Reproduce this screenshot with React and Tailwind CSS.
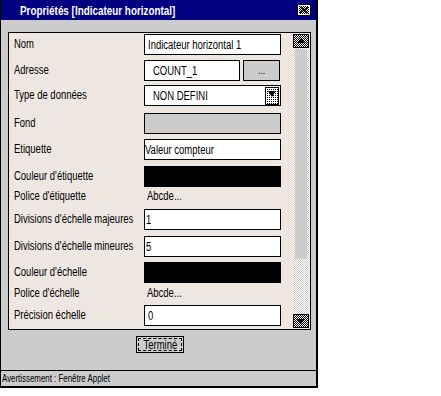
import React from "react";

const font = "font-['Liberation_Sans',Arial,sans-serif]";

// Arial Narrow is not installed, so squeeze Liberation Sans horizontally
const Txt = ({ children, center, tight }) => (
    <span className={`inline-block whitespace-nowrap ${tight ? "scale-x-[0.76]" : "scale-x-[0.79]"} ${center ? "origin-center" : "origin-left"}`}>
        {children}
    </span>
);

const Checker = ({ id }) => (
    <pattern id={id} width="2" height="2" patternUnits="userSpaceOnUse">
        <rect width="2" height="2" fill="#fff" />
        <rect width="1" height="1" fill="#000" />
        <rect x="1" y="1" width="1" height="1" fill="#000" />
    </pattern>
);

const CloseBox = () => (
    <svg width="14" height="12" viewBox="0 0 14 12">
        <defs><Checker id="cb" /></defs>
        <rect x="0.5" y="0.5" width="13" height="11" fill="#fff" stroke="#000" />
        <rect x="2" y="2" width="10" height="8" fill="url(#cb)" />
        <path d="M3 3l8 6M11 3l-8 6" stroke="#000" strokeWidth="1.2" />
    </svg>
);

const ScrollArrow = ({ up }) => (
    <svg width="16" height="14" viewBox="0 0 16 14" className="block">
        <defs><Checker id={up ? "sa1" : "sa2"} /></defs>
        <rect x="0" y="0" width="16" height="14" fill={`url(#${up ? "sa1" : "sa2"})`} />
        <rect x="0.5" y="0.5" width="15" height="13" fill="none" stroke="#000" />
        {up ? <path d="M8 4l4 5H4z" fill="#000" /> : <path d="M8 10l4-5H4z" fill="#000" />}
    </svg>
);

const DropArrow = () => (
    <svg width="14" height="18" viewBox="0 0 14 18" className="block">
        <defs>
            <pattern id="dots" width="2" height="2" patternUnits="userSpaceOnUse">
                <rect width="2" height="2" fill="#fff" />
                <rect width="1" height="1" fill="#000" />
            </pattern>
        </defs>
        <rect width="14" height="18" fill="url(#dots)" />
        <rect x="0.5" y="0.5" width="13" height="17" fill="none" stroke="#000" />
        <path d="M3 4h8l-4 6z" fill="#000" />
    </svg>
);

const Row = ({ label, mt, h = "h-[21px]", children }) => (
    <div className={`flex items-center ${h} ${mt}`}>
        <div className="w-[130px] shrink-0 text-[12px] text-black leading-none pb-[1px]">
            <Txt>{label}</Txt>
        </div>
        <div className="flex items-center">{children}</div>
    </div>
);

const Field = ({ value, w = "w-[137px]", pl = "pl-[3px]" }) => (
    <div className={`${w} h-[21px] bg-white border border-black flex items-center ${pl} text-[12px] leading-none overflow-hidden`}>
        <Txt>{value}</Txt>
    </div>
);

export default function App() {
    return (
        <div className={`w-[318px] h-[388px] flex flex-col bg-[#cccccc] border-l border-r-2 border-b-2 border-black ${font}`}>
            <div className="h-[20px] bg-[#000080] flex items-center justify-between pl-[19px] pr-[5px]">
                <span className="text-white font-bold text-[13px] leading-none">
                    <Txt tight>Propriétés [Indicateur horizontal]</Txt>
                </span>
                <CloseBox />
            </div>

            <div className="mt-[12px] ml-[7px] w-[303px] h-[298px] bg-[#eee7e1] border border-black flex">
                <div className="flex-1 pl-[5px]">
                    <Row label="Nom" mt="mt-[1px]">
                        <Field value="Indicateur horizontal 1" />
                    </Row>
                    <Row label="Adresse" mt="mt-[5px]">
                        <Field value="COUNT_1" w="w-[96px]" pl="pl-[8px]" />
                        <div className="ml-[3px] w-[37px] h-[21px] bg-[#cccccc] border border-black flex items-end justify-center pb-[4px] text-[11px] leading-none">
                            <Txt center>...</Txt>
                        </div>
                    </Row>
                    <Row label="Type de données" mt="mt-[4px]">
                        <div className="w-[137px] h-[21px] bg-white border border-black flex items-center justify-between pl-[8px] pr-[1px] text-[12px] leading-none">
                            <Txt>NON DEFINI</Txt>
                            <DropArrow />
                        </div>
                    </Row>
                    <Row label="Fond" mt="mt-[7px]">
                        <div className="w-[137px] h-[21px] bg-[#cccccc] border border-black" />
                    </Row>
                    <Row label="Etiquette" mt="mt-[5px]">
                        <Field value="Valeur compteur" pl="pl-0" />
                    </Row>
                    <Row label="Couleur d'étiquette" mt="mt-[6px]">
                        <div className="w-[137px] h-[21px] bg-black" />
                    </Row>
                    <Row label="Police d'étiquette" mt="mt-[1px]" h="h-[16px]">
                        <span className="pl-[3px] text-[12px] leading-none"><Txt>Abcde...</Txt></span>
                    </Row>
                    <Row label="Divisions d'échelle majeures" mt="mt-[5px]">
                        <Field value="1" pl="pl-[1px]" />
                    </Row>
                    <Row label="Divisions d'échelle mineures" mt="mt-[6px]">
                        <Field value="5" pl="pl-[1px]" />
                    </Row>
                    <Row label="Couleur d'échelle" mt="mt-[5px]">
                        <div className="w-[137px] h-[21px] bg-black" />
                    </Row>
                    <Row label="Police d'échelle" mt="mt-[2px]" h="h-[16px]">
                        <span className="pl-[3px] text-[12px] leading-none"><Txt>Abcde...</Txt></span>
                    </Row>
                    <Row label="Précision échelle" mt="mt-[4px]">
                        <Field value="0" />
                    </Row>
                </div>

                <div className="w-[16px] mt-[1px] mb-[1px] mr-[1px] flex flex-col">
                    <ScrollArrow up />
                    <div className="flex-1 bg-[repeating-conic-gradient(#cccccc_0_25%,#ffffff_0_50%)] bg-[length:2px_2px] px-[2px] pt-[1px] pb-[55px]">
                        <div className="h-full bg-[#cccccc]" />
                    </div>
                    <ScrollArrow />
                </div>
            </div>

            <div className="mt-[6px] flex justify-center">
                <div className="ml-[3px] w-[48px] h-[17px] border border-black p-[1px]">
                    <div className="w-full h-full border border-dashed border-black flex items-center justify-center text-[12px] leading-none">
                        <Txt center>Terminé</Txt>
                    </div>
                </div>
            </div>

            <div className="flex-1" />
            <div className="h-[16px] border-t border-black flex items-center pl-[1px] text-[10px] leading-none">
                <Txt>Avertissement : Fenêtre Applet</Txt>
            </div>
        </div>
    );
}
